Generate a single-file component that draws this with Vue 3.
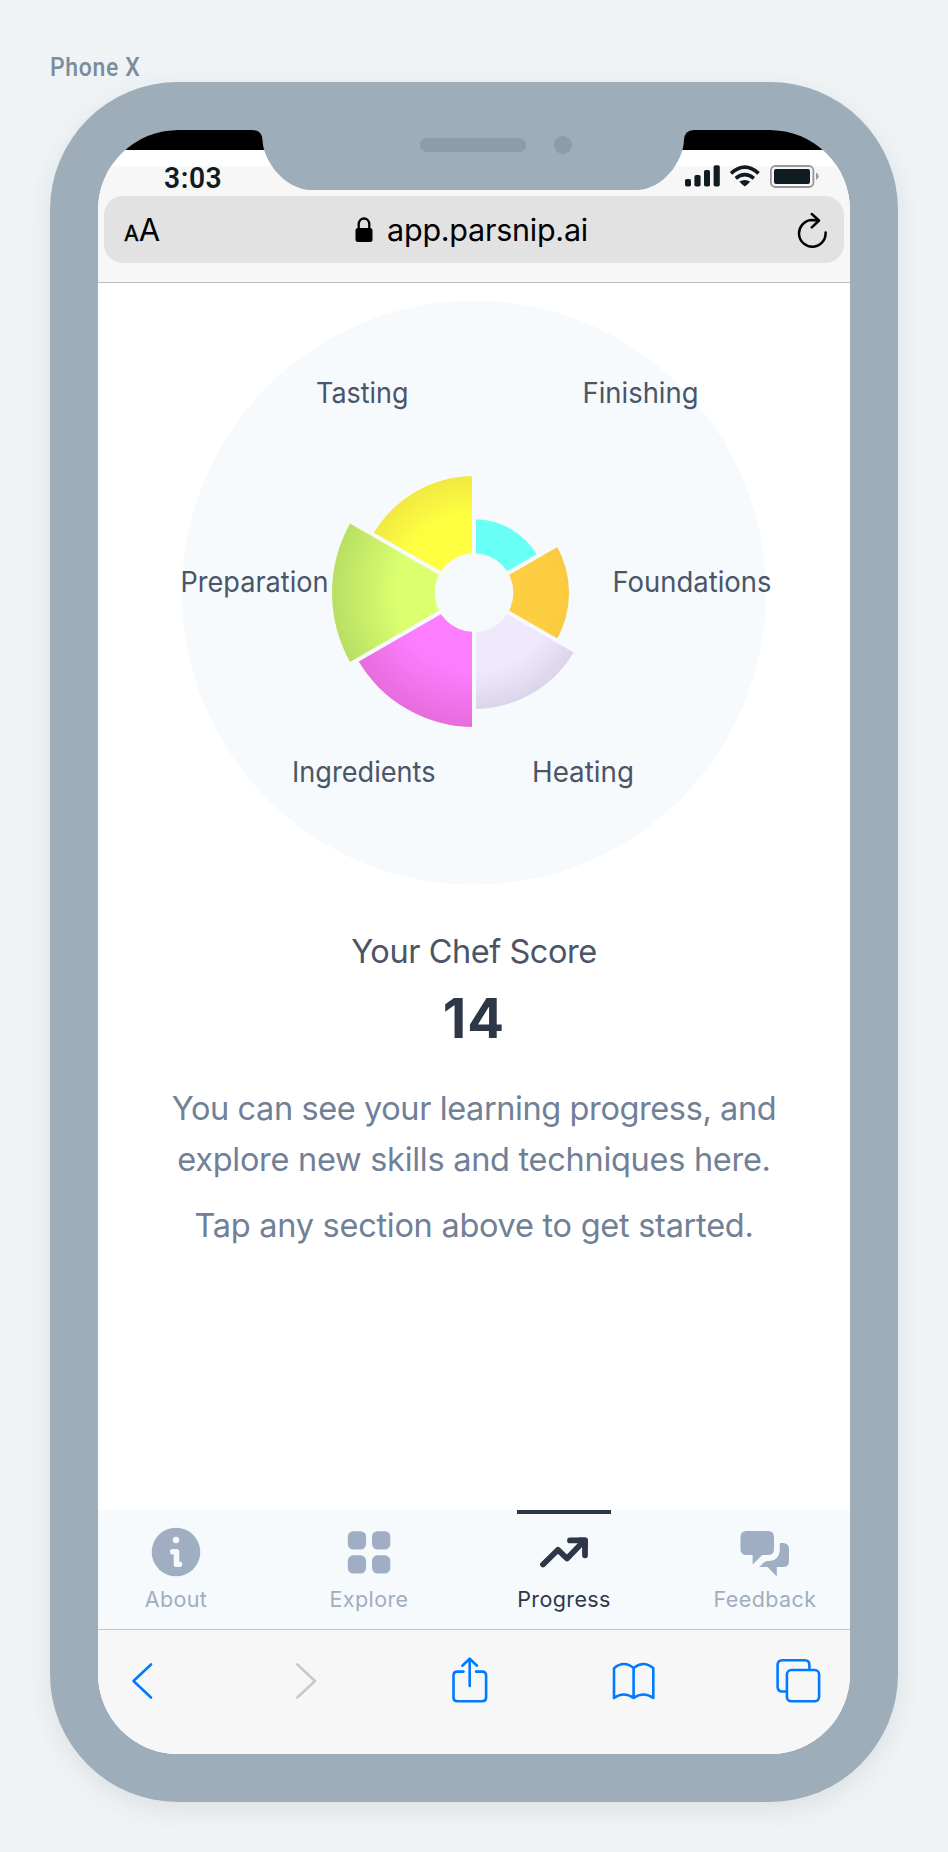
<script setup>
const rad = (deg) => (deg * Math.PI) / 180

// Angles are clockwise from twelve o'clock.
const slices = [
  { name: 'Finishing', from: 0, r: 73.5, fill: '#68fff5', edge: '#68fff5', x: 582.5, y: 403, w: 116 },
  { name: 'Foundations', from: 60, r: 95, fill: '#fdce41', edge: '#fac93f', x: 612.5, y: 592, w: 159 },
  { name: 'Heating', from: 120, r: 116.3, fill: '#f0e9fe', edge: '#dbd5ec', x: 532, y: 782, w: 102 },
  { name: 'Ingredients', from: 180, r: 134.3, fill: '#fd7dff', edge: '#e76cdc', x: 292, y: 782, w: 143.5 },
  { name: 'Preparation', from: 240, r: 142, fill: '#dbff6f', edge: '#b8df64', x: 180.5, y: 592, w: 148 },
  { name: 'Tasting', from: 300, r: 116.7, fill: '#feff40', edge: '#f1e942', x: 316, y: 403, w: 92.5 },
].map((s) => {
  const a = rad(s.from)
  const b = rad(s.from + 60)
  const p = (t) => `${(s.r * Math.sin(t)).toFixed(2)} ${(-s.r * Math.cos(t)).toFixed(2)}`
  return { ...s, d: `M0 0L${p(a)}A${s.r} ${s.r} 0 0 1 ${p(b)}Z`, start: Math.min(1, 78 / s.r) }
})
</script>

<template>
  <main class="stage">
    <div class="device-name"><span>Phone X</span></div>
    <div class="phone">
      <svg class="notch" width="448" height="61" viewBox="250 129 448 61">
        <path d="M250 129V130H252Q262 130 262.5 140C263 160 284 190 312 190H636C664 190 683.500 160 684 140Q684.500 130 694 130H698V129Z" fill="#9eadba" />
        <rect x="420" y="138" width="106" height="14" rx="7" fill="#8c9cab" />
        <circle cx="563" cy="145" r="9" fill="#8c9cab" />
      </svg>
      <div class="screen">
        <div class="black-strip"></div>
        <div class="white-strip"></div>
        <header class="browser-top">
          <div class="status">
            <span class="time">3:03</span>
            <svg width="136" height="26" viewBox="684 163 136 26">
              <g fill="#101b22">
                <rect x="685" y="179" width="6" height="7.500" rx="1.800" />
                <rect x="694.400" y="175" width="6.200" height="11.500" rx="1.800" />
                <rect x="704" y="170" width="6" height="16.500" rx="1.800" />
                <rect x="713.600" y="165.300" width="6.200" height="21.200" rx="1.800" />
                <path d="M739.400 181.600Q744.800 178.400 750.200 181.600Q749 183.600 744.800 186.400Q740.600 183.600 739.400 181.600Z" />
                <rect x="774" y="169" width="36" height="15" rx="2" />
              </g>
              <g fill="none" stroke="#101b22" stroke-width="3.600">
                <path d="M731 173.400Q744.800 161 758.600 173.400" />
                <path d="M735.700 178.300Q744.800 171 753.900 178.300" />
              </g>
              <rect x="770.900" y="166" width="42.500" height="21" rx="4.500" fill="none" stroke="#999799" stroke-width="1.800" />
              <path d="M816 172.500Q818.700 174 818.700 176.200T816 180Z" fill="#999799" />
            </svg>
          </div>
          <div class="address">
            <span class="reader"><small>A</small>A</span>
            <span class="url">
              <svg width="18" height="26" viewBox="0 0 18 26">
                <rect x="0.500" y="11" width="17" height="14" rx="2.500" />
                <path d="M3.700 12V7.500C3.700 -0.500 14.300 -0.500 14.300 7.500V12" fill="none" stroke="#000" stroke-width="2.300" />
              </svg>
              app.parsnip.ai
            </span>
            <svg class="reload" width="30" height="36" viewBox="797 212 30 36" fill="none" stroke="#000" stroke-width="2.500" stroke-linecap="round" stroke-linejoin="round">
              <path d="M825.600 232.500A13.300 13.300 0 1 1 811.500 220.100L818.500 220.500M811.800 214L819 220.500L811.800 227.300" />
            </svg>
          </div>
        </header>

        <section class="content">
          <svg class="chart" width="752" height="600" viewBox="98 293 752 600">
            <defs>
              <radialGradient v-for="s in slices" :id="'shade-' + s.name" :key="s.name" gradientUnits="userSpaceOnUse" cx="0" cy="0" :r="s.r">
                <stop :offset="s.start" :stop-color="s.fill" />
                <stop offset="1" :stop-color="s.edge" />
              </radialGradient>
            </defs>
            <circle cx="474" cy="592.700" r="292" fill="#f6fafd" />
            <g transform="translate(474 592.700)">
              <path v-for="s in slices" :key="s.name" :d="s.d" :fill="`url(#shade-${s.name})`" />
              <path d="M0 -150V150M-130 -75L130 75M-130 75L130 -75" stroke="#f6fafd" stroke-width="4" />
              <circle r="39.400" fill="#f6fafd" />
            </g>
            <text v-for="s in slices" :key="s.name" :x="s.x" :y="s.y" :textLength="s.w" lengthAdjust="spacingAndGlyphs">{{ s.name }}</text>
          </svg>
          <h2>Your Chef Score</h2>
          <div class="score">14</div>
          <p>You can see your learning progress, and<br /><span class="second">explore new skills and techniques here.</span></p>
          <p class="hint">Tap any section above to get started.</p>
        </section>

        <nav class="tabs">
          <div class="tab">
            <svg width="50" height="50" viewBox="0 0 50 50">
              <circle cx="25" cy="25" r="24.300" fill="#9faec2" />
              <circle cx="25" cy="13" r="3.200" fill="#f6fafd" />
              <path d="M21.800 24.800H25.500V37.300H28.500" fill="none" stroke="#f6fafd" stroke-width="5.600" stroke-linecap="round" stroke-linejoin="round" />
            </svg>
            <span>About</span>
          </div>
          <div class="tab explore">
            <svg width="50" height="50" viewBox="0 0 50 50" fill="#9faec2">
              <rect x="3.800" y="4.200" width="18.300" height="18.300" rx="5.500" />
              <rect x="28" y="4.200" width="18.300" height="18.300" rx="5.500" />
              <rect x="3.800" y="28.300" width="18.300" height="18.300" rx="5.500" />
              <rect x="28" y="28.300" width="18.300" height="18.300" rx="5.500" />
            </svg>
            <span>Explore</span>
          </div>
          <div class="tab progress">
            <svg width="50" height="50" viewBox="0 0 50 50" fill="none" stroke="#2d3748" stroke-width="5.800" stroke-linecap="round" stroke-linejoin="round">
              <path d="M4 37.500L19 22.800L28 31.500L44.500 14.500" />
              <path d="M31 13.400H46V28.300" />
              <path d="M40.500 13.400H46V19Z" fill="#2d3748" />
            </svg>
            <span>Progress</span>
          </div>
          <div class="tab feedback">
            <svg width="50" height="50" viewBox="0 0 50 50" fill="#9faec2">
              <path d="M6.500 4H28Q34 4 34 10V22Q34 28 28 28H22.300L12.600 37.500V28H6.500Q0.500 28 0.500 22V10Q0.500 4 6.500 4Z" />
              <path d="M39.800 16H43Q49 16.500 49 22V34Q49 40 43 40H36.800V49.500L27.500 40H19.200L24.500 35Q26 34 28.500 34C35.500 34 39.800 29.500 39.800 22.500Z" />
            </svg>
            <span>Feedback</span>
          </div>
        </nav>

        <footer class="toolbar">
          <svg viewBox="0 0 48 48"><path d="M33 8.500L15.500 25L33 41.500" /></svg>
          <svg viewBox="0 0 48 48" class="disabled"><path d="M15.300 8.500L33 25L15.300 41.500" /></svg>
          <svg viewBox="0 0 48 48"><path d="M17.500 15.600H11.300Q7.500 15.600 7.500 19.400V41.500Q7.500 45.200 11.300 45.200H36.300Q40.100 45.200 40.100 41.500V19.400Q40.100 15.600 36.300 15.600H30M23.700 30V3M16.300 9.700L23.700 2.700L31 9.700" /></svg>
          <svg viewBox="0 0 48 48"><path d="M23.600 12Q28.500 8 33.500 8T43.300 12.200V42Q33.500 35 23.600 42Q13.800 35 4 42V12.200Q8.700 8 13.800 8T23.600 12V42" /></svg>
          <svg viewBox="0 0 48 48"><path d="M12.900 35.500H8.300Q3.600 35.500 3.600 30.800V9Q3.600 4.300 8.300 4.300H30.700Q35.400 4.300 35.400 9V14" /><rect x="12.900" y="14" width="32.200" height="31.300" rx="4.500" /></svg>
        </footer>
      </div>
    </div>
  </main>
</template>

<style>
body { background: #eff3f6; }
</style>

<style scoped>
.stage {
  box-sizing: border-box;
  width: 948px;
  height: 1852px;
  padding: 50px 50px 0;
  overflow: hidden;
  font-family: Inter, "Liberation Sans", sans-serif;
  background: #eff3f6;
}
.device-name {
  height: 32px;
  font: 500 25px/36px Roboto, sans-serif;
  letter-spacing: 0.7px;
  color: #7b8c9c;
  white-space: nowrap;
}
.device-name span { display: inline-block; transform: scaleX(0.92); transform-origin: left; }
.phone {
  position: relative;
  box-sizing: border-box;
  width: 848px;
  height: 1720px;
  padding: 48px;
  border-radius: 128px;
  background: #9eadba;
  box-shadow: 0 8px 24px rgba(60, 65, 70, 0.1);
}
.notch { position: absolute; z-index: 2; top: 47px; left: 200px; }
.screen {
  display: flex;
  flex-direction: column;
  width: 752px;
  height: 1624px;
  overflow: hidden;
  border-radius: 80px;
  background: #fff;
}
.black-strip { flex: none; height: 20px; background: #000; }
.white-strip { flex: none; height: 16px; }
.browser-top {
  flex: none;
  box-sizing: border-box;
  height: 117px;
  padding: 0 6px;
  background: #f7f7f7;
  border-bottom: 1px solid #bbb;
}
.status {
  display: flex;
  justify-content: space-between;
  height: 30px;
  padding: 0 24px 0 60px;
}
.status svg { margin-top: -3px; }
.time {
  font: 600 30px/23px Roboto, sans-serif;
  letter-spacing: 0.6px;
  color: #101b22;
  transform: scaleX(0.94);
  transform-origin: left;
}
.address {
  display: flex;
  align-items: center;
  justify-content: space-between;
  box-sizing: border-box;
  height: 67px;
  padding: 0 17px 0 20px;
  border-radius: 19px;
  background: #e2e2e2;
}
.reader { width: 60px; margin: 3px -38px 0 0; font-size: 31px; line-height: 40px; white-space: nowrap; }
.reader small { font-size: 21.500px; -webkit-text-stroke: 0.400px #000; }
.url { display: flex; align-items: center; gap: 14px; font-size: 30.500px; line-height: 40px; letter-spacing: -0.250px; white-space: nowrap; }
.url svg { margin-top: 1px; }
.content {
  display: flex;
  flex: 1;
  flex-direction: column;
  align-items: center;
  padding-top: 10px;
  text-align: center;
}
.chart { flex: none; font-size: 28.500px; fill: #4a5568; }
h2 { margin: 34px 0 0; font-size: 32.500px; font-weight: 400; line-height: 50px; letter-spacing: -0.450px; color: #4a5568; }
.score { margin-top: 1px; font-size: 54.500px; font-weight: 700; line-height: 80px; color: #2d3748; letter-spacing: 1px; }
p { margin: 25px 0 0; font-size: 32.500px; line-height: 51px; letter-spacing: -0.400px; color: #718096; white-space: nowrap; }
.second { letter-spacing: -0.280px; }
.hint { margin-top: 15px; letter-spacing: -0.270px; }
.tabs { display: flex; flex: none; height: 119px; padding-left: 18px; background: #f6fafd; }
.tab {
  display: flex;
  flex: none;
  flex-direction: column;
  align-items: center;
  box-sizing: border-box;
  width: 120px;
  padding-top: 16.500px;
  font-size: 21.500px;
  line-height: 28px;
  letter-spacing: 0.400px;
  color: #a0aec0;
}
.tab svg { flex: none; }
.tab span { margin-top: 8px; }
.explore { margin-left: 73px; }
.progress { margin-left: 75px; padding-top: 0; color: #2d3748; }
.progress::before { width: 94px; height: 4px; margin-bottom: 12.500px; content: ""; background: #2d3748; }
.feedback { margin-left: 81px; }
.toolbar {
  display: flex;
  flex: none;
  gap: 116px;
  box-sizing: border-box;
  height: 125px;
  padding: 25.500px 0 0 20.200px;
  border-top: 1px solid #c2c6c8;
  background: #f7f7f7;
}
.toolbar svg {
  flex: none;
  width: 48px;
  height: 48px;
  overflow: visible;
  fill: none;
  stroke: #007aff;
  stroke-width: 2.600;
  stroke-linecap: round;
  stroke-linejoin: round;
}
.toolbar .disabled { stroke: #c9c9c9; }
</style>
